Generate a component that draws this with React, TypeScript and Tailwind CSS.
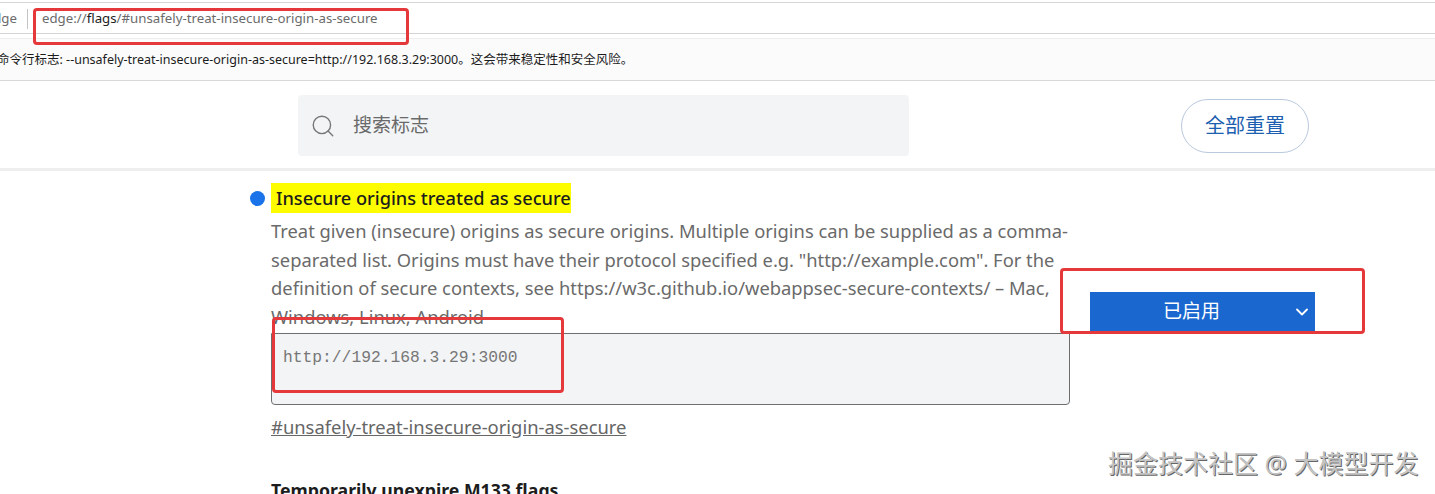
import { ChevronDown, Search } from "lucide-react";

const font = "font-['Noto_Sans','Noto_Sans_CJK_SC',sans-serif]";

const App = () => {
    return (
        <div className={`relative h-[494px] w-[1435px] overflow-hidden bg-white ${font}`}>
            {/* Address bar */}
            <div className="mt-[2px] flex h-[32px] items-center border-y border-t-[#d6d6d6] border-b-[#d4d4d4] pt-[1px] text-[13.25px] leading-none text-[#6b6b6b]">
                <span className="-ml-[12px] w-[29px] text-right">dge</span>
                <span className="ml-[10px] h-[20px] w-px bg-[#c4c4c4]" />
                <span className="ml-[14px]">
                    edge://<span className="text-[#222]">flags</span>/#unsafely-treat-insecure-origin-as-secure
                </span>
            </div>

            {/* Command line warning */}
            <div className="mt-[4px] flex h-[43px] items-center overflow-hidden border-y border-t-[#eeeeee] border-b-[#d8d8d8] bg-[#fbfbfb] pt-[2px] text-[12.5px] whitespace-nowrap text-[#1c1c1c]">
                <span className="-ml-[3px]">命令行标志: --unsafely-treat-insecure-origin-as-secure=http://192.168.3.29:3000。这会带来稳定性和安全风险。</span>
            </div>

            {/* Search header */}
            <div className="flex h-[90px] items-start border-b-[3px] border-[#eeeeee] pt-[14px]">
                <div className="ml-[298px] flex h-[61px] w-[611px] items-center rounded bg-[#f2f4f6] pl-[12px] text-[19px] text-[#6a6a6a]">
                    <Search className="h-[26px] w-[26px] text-[#777]" strokeWidth={1.3} />
                    <span className="ml-[17px]">搜索标志</span>
                </div>
                <button className="mt-[4px] ml-[272px] h-[54px] w-[128px] rounded-full border border-[#b9c9de] text-[20px] text-[#1d5fb0]">
                    全部重置
                </button>
            </div>

            {/* Flag */}
            <div className="flex">
                <div className="ml-[250px] w-[820px]">
                    <div className="mt-[12px] flex items-center">
                        <span className="h-[15px] w-[15px] rounded-full bg-[#1a73e8]" />
                        <span className="ml-[6px] flex h-[30px] w-[300px] items-center bg-[#fdfd00] pt-[1px] pl-[5px] text-[18.2px] font-medium whitespace-nowrap text-[#1c1c1c]">
                            Insecure origins treated as secure
                        </span>
                    </div>
                    <div className="ml-[21px]">
                        <p className="mt-[4px] w-[799px] text-[18.35px] leading-[28.5px] text-[#6a6a6a]">
                            Treat given (insecure) origins as secure origins. Multiple origins can be supplied as a comma-separated list. Origins must have their protocol specified e.g. "http://example.com". For the definition of secure contexts, see https://w3c.github.io/webappsec-secure-contexts/ – Mac, Windows, Linux, Android
                        </p>
                        <div className="mt-[2px] h-[72px] w-[799px] rounded-b border border-[#6e6e6e] bg-[#f2f4f6] pt-[12px] pl-[11px] font-['Liberation_Mono',monospace] text-[16.3px] text-[#777]">
                            http://192.168.3.29:3000
                        </div>
                        <div className="mt-[8px] text-[18.4px] text-[#666] underline">#unsafely-treat-insecure-origin-as-secure</div>
                        <div className="mt-[36px] text-[17.7px] font-bold text-[#1c1c1c]">Temporarily unexpire M133 flags</div>
                    </div>
                </div>
                <div className="mt-[121px] ml-[20px] flex h-[39px] w-[225px] items-center bg-[#1967cf] text-[19px] text-white">
                    <span className="ml-[73px]">已启用</span>
                    <ChevronDown className="ml-[72px] h-[20px] w-[20px]" strokeWidth={2.2} />
                </div>
            </div>

            {/* Red annotation boxes */}
            <div className="absolute top-[8px] left-[33px] h-[37px] w-[376px] rounded border-[3px] border-[#e5383b]" />
            <div className="absolute top-[268px] left-[1060px] h-[66px] w-[305px] rounded border-[3px] border-[#e5383b]" />
            <div className="absolute top-[317px] left-[272px] h-[76px] w-[292px] rounded border-[3px] border-[#e5383b]" />

            {/* Watermark */}
            <div className="absolute top-[447px] left-[1108px] text-[25px] leading-[32px] whitespace-nowrap text-[#c4c4c4] [text-shadow:1px_1px_0_#666]">
                掘金技术社区 @ 大模型开发
            </div>
        </div>
    );
};

export default App;
